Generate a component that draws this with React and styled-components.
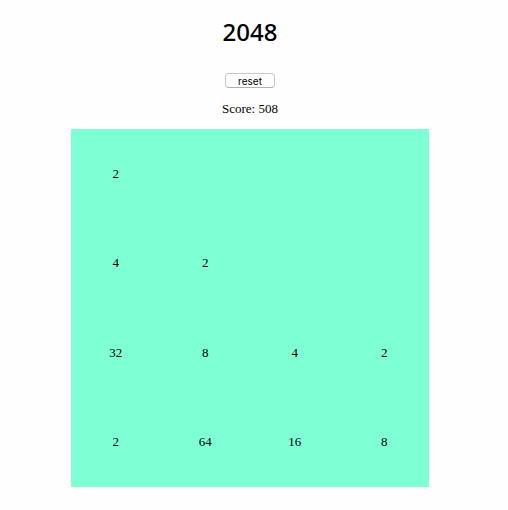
import React, { useState } from "react";
import styled, { createGlobalStyle } from "styled-components";

const GlobalStyle = createGlobalStyle`
  body {
    margin: 0;
    background: #fefefe;
    color: #000;
    font: 13px/16px "Liberation Serif", "Times New Roman", serif;
  }
`;

const Game = styled.main`
  display: flex;
  flex-direction: column;
  align-items: center;
  padding: 16px 16px 22px 8px;
`;

const Title = styled.h1`
  margin: 0 0 25px;
  font: 500 24px/32px "Noto Sans", "Open Sans", sans-serif;
`;

const ResetButton = styled.button`
  box-sizing: border-box;
  width: 50px;
  height: 15px;
  padding: 0;
  border: 1px solid #c8c8c8;
  border-bottom-color: #b0b0b0;
  border-radius: 4px;
  background: #fff;
  color: #000;
  font: 10px/12px Inter, "Liberation Sans", sans-serif;
`;

const Score = styled.p`
  margin: 13px 0 12px;
`;

const Board = styled.div`
  display: grid;
  grid-template-columns: repeat(4, 1fr);
  grid-template-rows: repeat(4, 1fr);
  width: 74%;
  aspect-ratio: 1;
  background: #7fffd4;
`;

const Tile = styled.div`
  display: flex;
  align-items: center;
  justify-content: center;
`;

const START = [2, 0, 0, 0, 4, 2, 0, 0, 32, 8, 4, 2, 2, 64, 16, 8];

export default function App() {
  const [tiles, setTiles] = useState(START);
  const [score, setScore] = useState(508);

  const reset = () => {
    setTiles(START.map(() => 0));
    setScore(0);
  };

  return (
    <>
      <GlobalStyle />
      <Game>
        <Title>2048</Title>
        <ResetButton type="button" onClick={reset}>reset</ResetButton>
        <Score>Score: {score}</Score>
        <Board>
          {tiles.map((value, index) => (
            <Tile key={index}>{value || ""}</Tile>
          ))}
        </Board>
      </Game>
    </>
  );
}
